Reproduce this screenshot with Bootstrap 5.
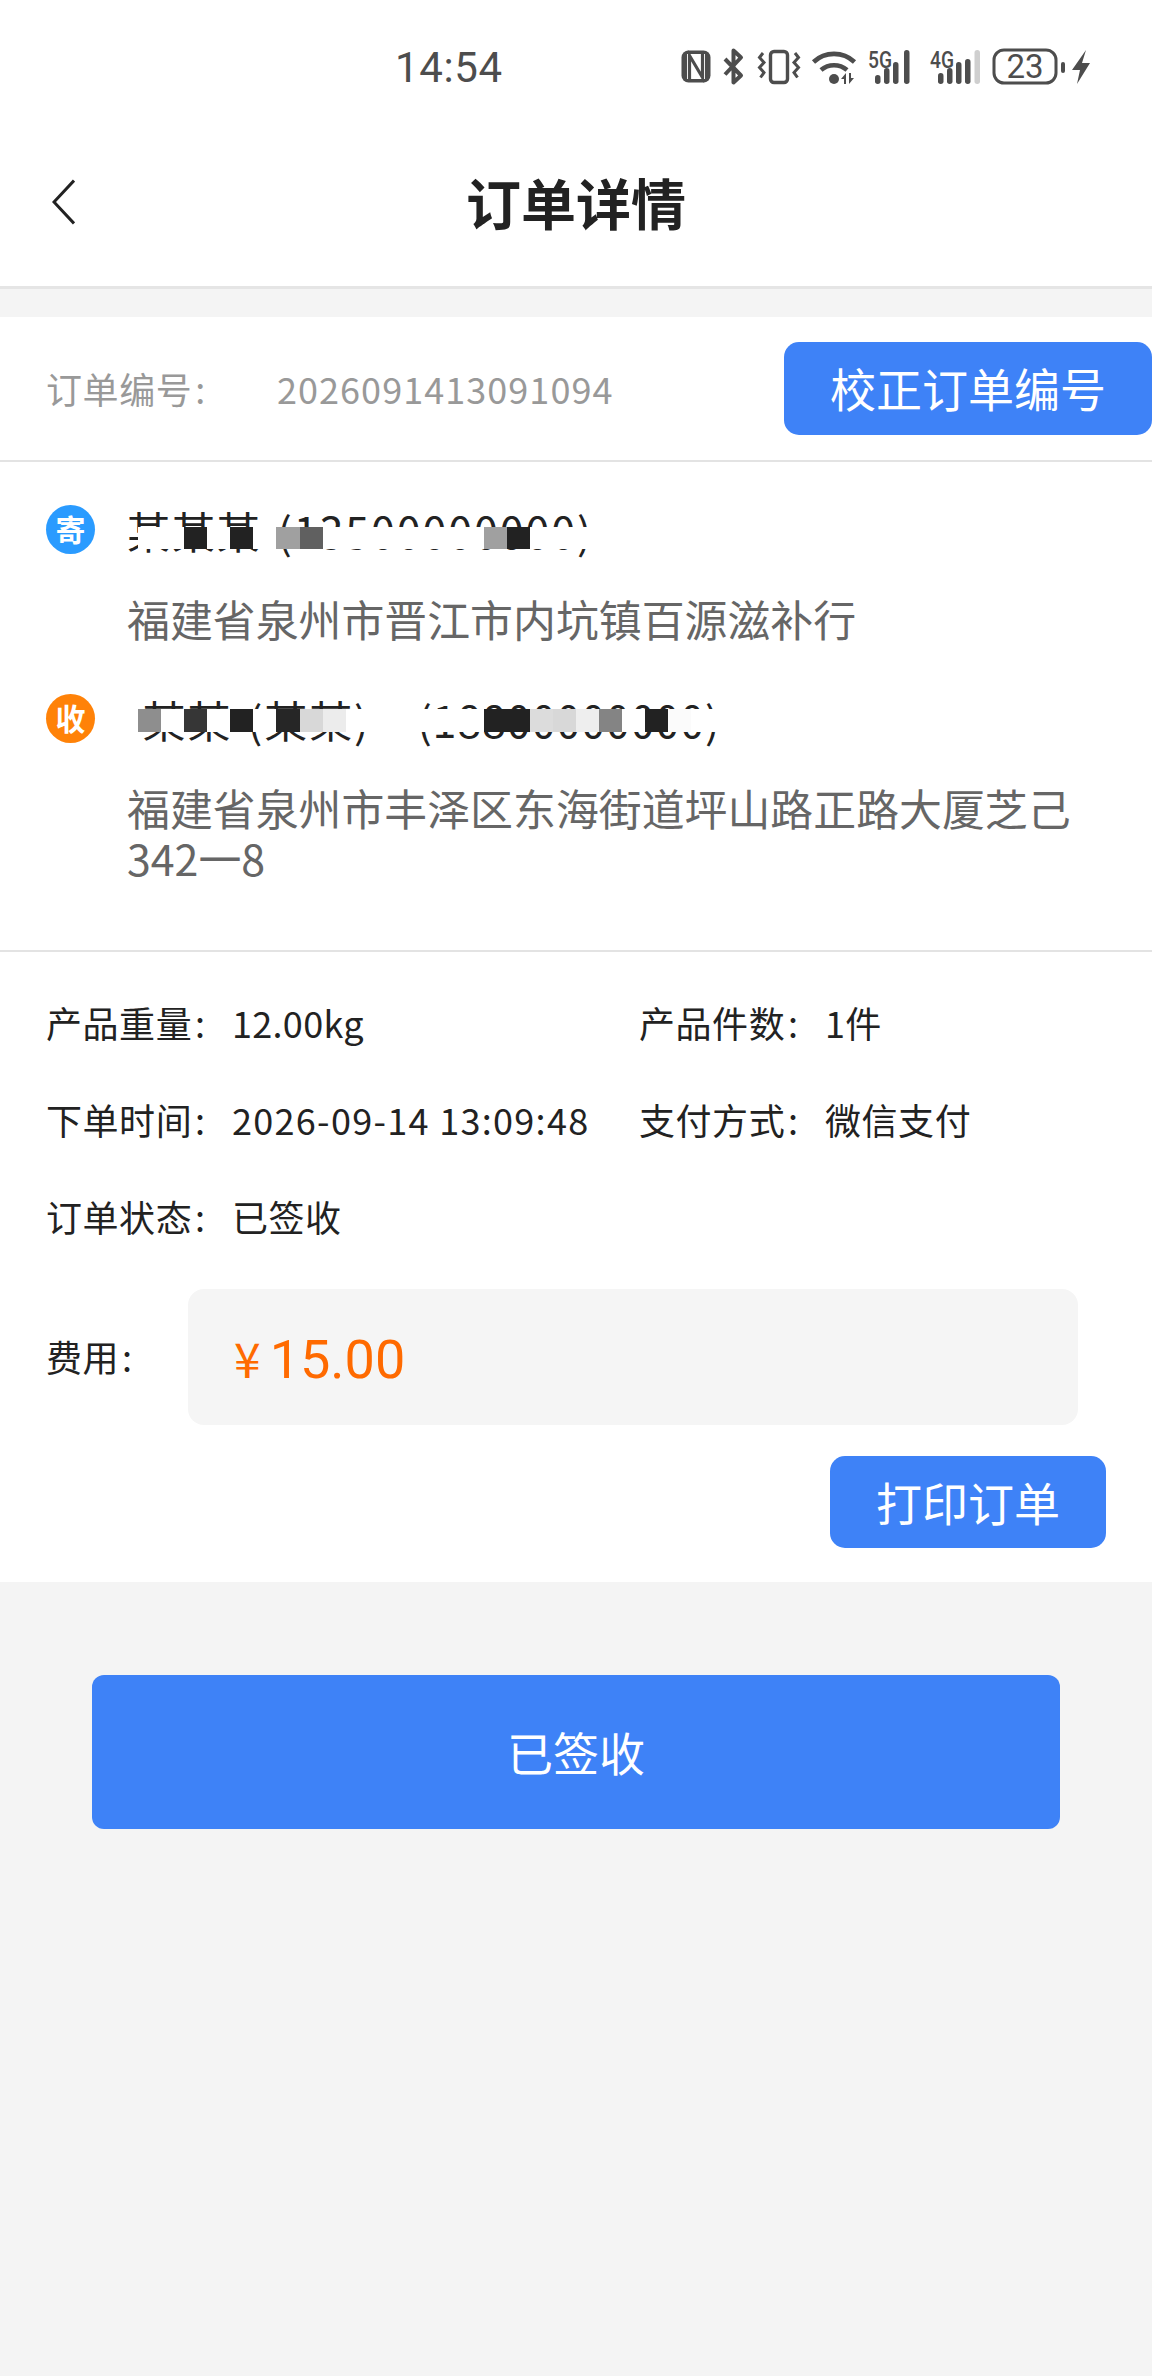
<!DOCTYPE html>
<html lang="zh-CN">
<head>
<meta charset="utf-8">
<title>订单详情</title>
<link href="https://cdn.jsdelivr.net/npm/bootstrap@5.3.0/dist/css/bootstrap.min.css" rel="stylesheet">
<style>
html,body{margin:0;background:#f4f4f4}
body{width:1152px;min-height:2376px;font-family:"Noto Sans CJK SC","Roboto",sans-serif;color:#222}
.phone-status{height:90px;background:#fff;padding-left:395px}
.phone-time{font-family:"Roboto",sans-serif;font-size:42px;line-height:48px;margin-top:44px;color:#4d4d4d;letter-spacing:.6px}
.status-icons{margin-left:169px;margin-top:40px;width:430px;height:50px;display:block}
.status-icons text{font-family:"Roboto",sans-serif;fill:#4d4d4d}
.page-head{height:199px;background:#fff;border-bottom:3px solid #e5e5e5;padding:0 0 0 52px}
.back-mark{width:23px;height:46px;margin-top:28px;display:block}
.page-title{font-size:55px;line-height:64px;font-weight:700;margin:0;color:#222;position:absolute;left:0;right:0;text-align:center;top:169px}
.order-row{margin-top:28px;height:145px;background:#fff;border-bottom:2px solid #e3e3e3;padding-left:46px;color:#999;font-size:36px;letter-spacing:1.05px}
.order-label{width:231px;letter-spacing:.6px;padding-bottom:2px}
.order-no{padding-bottom:2px}
.btn.blue-btn{background:#3e82f7;border:0;color:#fff;font-size:46px;line-height:60px;padding:0 0 3px;border-radius:15px}
.fix-btn{width:368px;height:93px;margin-top:-1px}
.addr-block{background:#fff;border-bottom:2px solid #e3e3e3;padding:43px 46px 68px 46px}
.addr-entry{display:flex}
.mark-dot{width:49px;height:49px;border-radius:50%;color:#fff;font-size:30px;font-weight:700;line-height:47px;text-align:center;flex:none;margin-right:32px}
.dot-send{background:#2a9bff}
.dot-recv{background:#ff8208}
.addr-name{position:relative;font-size:43px;line-height:50px;height:50px;color:#222;white-space:pre;letter-spacing:1.9px;word-spacing:4px}
.recv-phone{letter-spacing:.9px}
.addr-text{font-size:42.9px;line-height:50px;color:#666;margin:38px 0 0;position:relative}
.recv-entry{margin-top:51px}
.mosaic{position:absolute;left:11px}
.mosaic-send{top:22px;height:22px;width:462px;background:linear-gradient(90deg,#fff 46px,#222 46px 69px,#fff 69px 92px,#222 92px 115px,#fff 115px 138px,#a0a0a0 138px 162px,#606060 162px 185px,#fff 185px 346px,#a0a0a0 346px 369px,#222 369px 392px,#fff 392px)}
.mosaic-recv{top:15px;height:23px;width:590px;background:linear-gradient(90deg,#8e8e8e 0 23px,#fff 23px 46px,#363636 46px 69px,#fff 69px 92px,#222 92px 115px,#fff 115px 138px,#262626 138px 162px,#d8d8d8 162px 185px,#ececec 185px 208px,#fff 208px 346px,#222 346px 392px,#dcdcdc 392px 415px,#d8d8d8 415px 438px,#eee 438px 461px,#848484 461px 484px,#fff 484px 507px,#222 507px 530px,#fbfbfb 530px 553px,#fff 553px)}
.info-block{background:#fff;padding:21px 46px 34px}
.info-row{height:97px;font-size:36px;letter-spacing:.3px}
.info-left{width:593px}
.info-key{width:186px;flex:none;letter-spacing:.55px}
.cjk-val{letter-spacing:.55px}
.date-val{letter-spacing:1.3px}
.fee-row{margin-top:25px}
.fee-key{width:142px;font-size:36px;letter-spacing:.55px;padding-bottom:2px}
.fee-box{width:890px;height:136px;background:#f5f5f5;border-radius:16px;color:#ff6a00;padding-left:46px}
.fee-yen{font-size:48px;line-height:1;margin-right:9px}
.fee-num{font-family:"Roboto",sans-serif;font-size:54px;line-height:1;padding-top:5px}
.print-row{margin-top:31px}
.print-btn{width:276px;height:92px}
.btn.big-btn{display:block;width:968px;height:154px;margin:93px 0 0 92px;border-radius:12px}
</style>
</head>
<body>
<div class="phone-status d-flex align-items-start">
  <div class="phone-time">14:54</div>
  <svg class="status-icons" viewBox="670 40 430 50" xmlns="http://www.w3.org/2000/svg" aria-hidden="true">
    <g fill="none" stroke="#4d4d4d">
      <rect x="679.5" y="50.500" width="29" height="32" rx="7" fill="#4d4d4d" stroke="none"/>
      <rect x="685" y="54" width="18" height="25" fill="#fff" stroke="none"/>
      <path d="M687.500 79V55.500L700.500 77.500V54" stroke="#4d4d4d" stroke-width="3.200"/>
      <path d="M723 59l16 16.500-7.500 7V50.500l7.500 7-16 17" stroke-width="4" stroke-linejoin="round"/>
      <rect x="768.500" y="51.500" width="17" height="31" rx="3.500" stroke-width="3.400"/>
      <path d="M761 53l-3.500 4.500 4.500 5-4.500 5 4.500 5-3.500 5M793 53l3.500 4.500-4.500 5 4.500 5-4.500 5 3.500 5" stroke-width="3"/>
      <path d="M811.500 62a30 30 0 0 1 41 0M819 70a20 20 0 0 1 26 0" stroke-width="4.600"/>
    </g>
    <g fill="#4d4d4d">
      <circle cx="832" cy="79" r="5"/>
      <path d="M844 73l-5 6h3v5h2zM847 73v11l5-6h-3v-5z"/>
      <text x="866" y="68" font-size="24" font-weight="500" textLength="24" lengthAdjust="spacingAndGlyphs">5G</text>
      <rect x="873" y="75" width="5.500" height="9" rx="2.700"/>
      <rect x="882" y="68" width="5.500" height="16" rx="2.700"/>
      <rect x="891" y="62" width="5.500" height="22" rx="2.700"/>
      <rect x="902" y="50" width="5.500" height="34" rx="2.700"/>
      <text x="928" y="68" font-size="24" font-weight="500" textLength="24" lengthAdjust="spacingAndGlyphs">4G</text>
      <rect x="936" y="73" width="5.500" height="11" rx="2.700"/>
      <rect x="945" y="68" width="5.500" height="16" rx="2.700"/>
      <rect x="954" y="62" width="5.500" height="22" rx="2.700"/>
      <rect x="963" y="59" width="5.500" height="25" rx="2.700"/>
      <rect x="972.500" y="50" width="5.500" height="34" rx="2.700" fill="#cfcfcf"/>
      <rect x="992" y="50" width="62" height="33" rx="10" fill="none" stroke="#4d4d4d" stroke-width="3"/>
      <text x="1023" y="78" font-size="33" text-anchor="middle">23</text>
      <rect x="1059" y="62" width="4" height="11" rx="2"/>
      <path d="M1084 50l-14 20h8l-3 14 13-21h-8z"/>
    </g>
  </svg>
</div>
<header class="page-head d-flex align-items-center">
  <svg class="back-mark" viewBox="0 0 23 46" aria-hidden="true"><path d="M22 1.500L2 23l20 21.500" fill="none" stroke="#222" stroke-width="3"/></svg>
  <h1 class="page-title">订单详情</h1>
</header>
<section class="order-row d-flex align-items-center">
  <div class="order-label">订单编号&#8202;:</div>
  <div class="order-no">2026091413091094</div>
  <button type="button" class="btn blue-btn fix-btn ms-auto">校正订单编号</button>
</section>
<section class="addr-block">
  <div class="addr-entry">
    <div class="mark-dot dot-send">寄</div>
    <div>
      <div class="addr-name">某某某 (13500000000)<span class="mosaic mosaic-send"></span></div>
      <p class="addr-text">福建省泉州市晋江市内坑镇百源滋补行</p>
    </div>
  </div>
  <div class="addr-entry recv-entry">
    <div class="mark-dot dot-recv">收</div>
    <div>
      <div class="addr-name"> 某某 (某某)   <span class="recv-phone">(18800000000)</span><span class="mosaic mosaic-recv"></span></div>
      <p class="addr-text">福建省泉州市丰泽区东海街道坪山路正路大厦芝己342一8</p>
    </div>
  </div>
</section>
<section class="info-block">
  <div class="info-row d-flex align-items-center">
    <div class="info-left d-flex"><span class="info-key">产品重量&#8202;:</span><span>12.00kg</span></div>
    <div class="d-flex"><span class="info-key">产品件数&#8202;:</span><span>1件</span></div>
  </div>
  <div class="info-row d-flex align-items-center">
    <div class="info-left d-flex"><span class="info-key">下单时间&#8202;:</span><span class="date-val">2026-09-14 13:09:48</span></div>
    <div class="d-flex"><span class="info-key">支付方式&#8202;:</span><span class="cjk-val">微信支付</span></div>
  </div>
  <div class="info-row d-flex align-items-center">
    <div class="info-left d-flex"><span class="info-key">订单状态&#8202;:</span><span class="cjk-val">已签收</span></div>
  </div>
  <div class="fee-row d-flex align-items-center">
    <div class="fee-key">费用&#8202;:</div>
    <div class="fee-box d-flex align-items-center"><span class="fee-yen">¥</span><span class="fee-num">15.00</span></div>
  </div>
  <div class="print-row d-flex justify-content-end">
    <button type="button" class="btn blue-btn print-btn">打印订单</button>
  </div>
</section>
<button type="button" class="btn blue-btn big-btn">已签收</button>
<script src="https://cdn.jsdelivr.net/npm/bootstrap@5.3.0/dist/js/bootstrap.bundle.min.js"></script>
</body>
</html>
